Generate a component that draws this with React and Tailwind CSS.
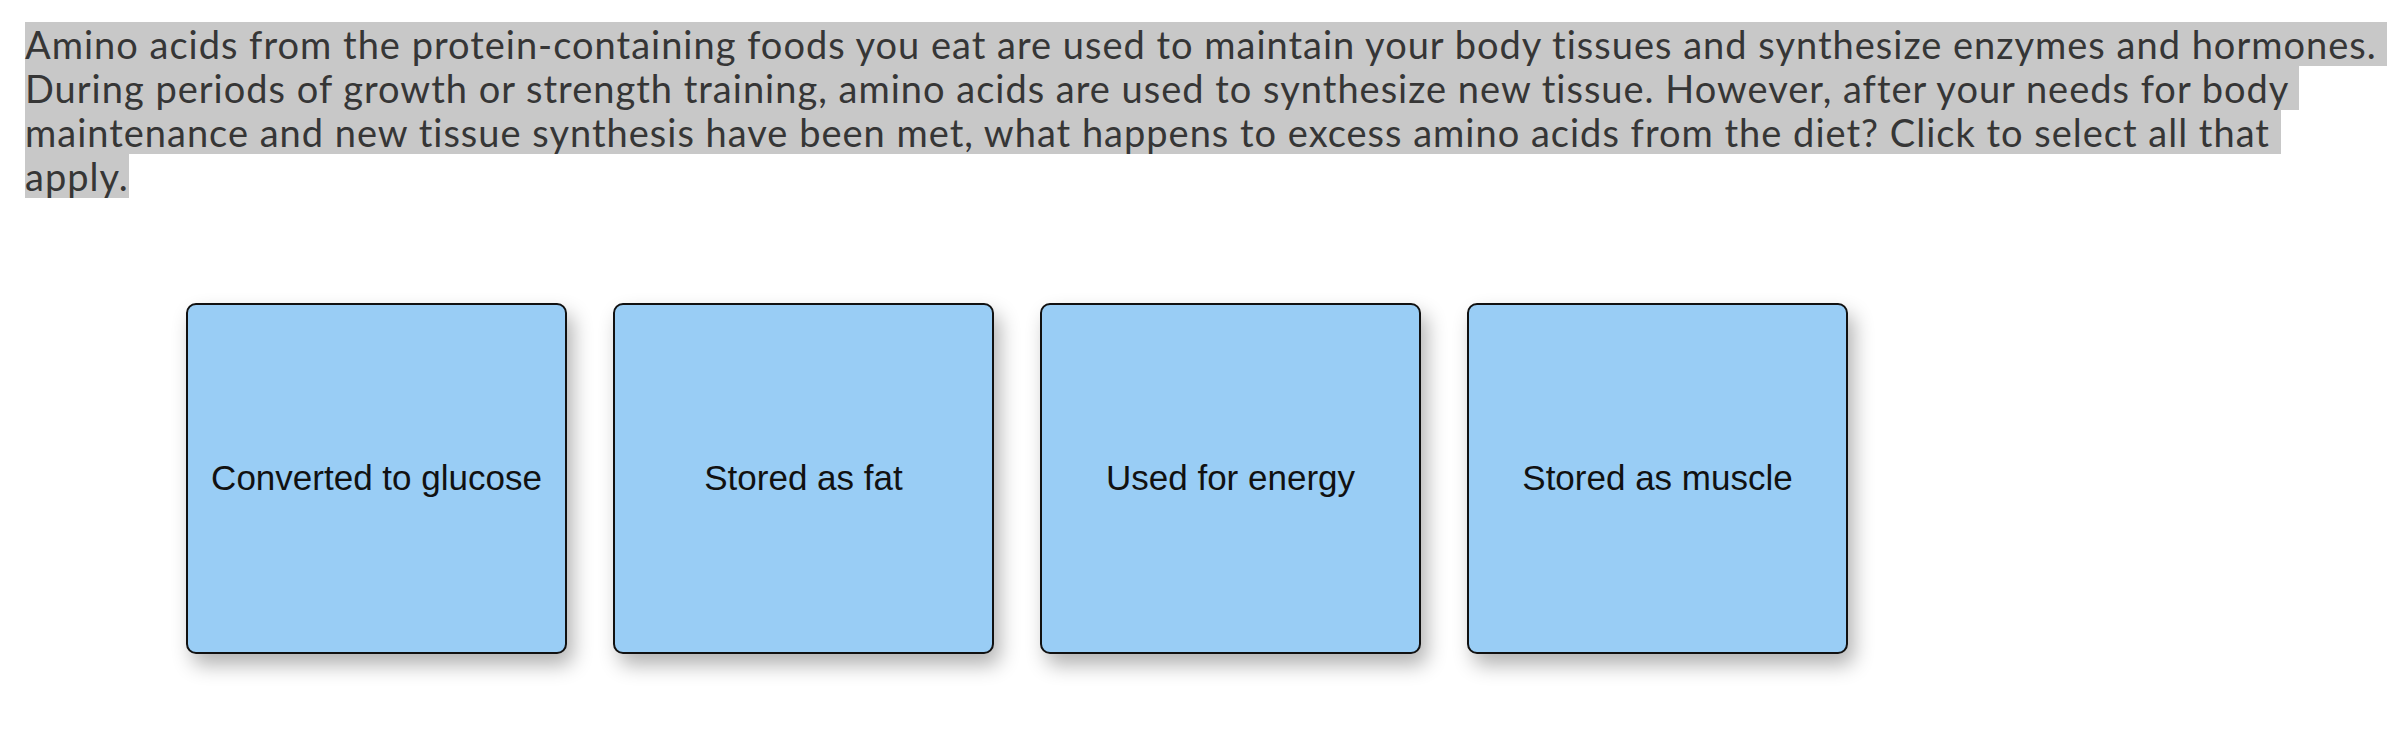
import React from "react";

const lines = [
  "Amino acids from the protein-containing foods you eat are used to maintain your body tissues and synthesize enzymes and hormones. ",
  "During periods of growth or strength training, amino acids are used to synthesize new tissue. However, after your needs for body ",
  "maintenance and new tissue synthesis have been met, what happens to excess amino acids from the diet? Click to select all that ",
  "apply.",
];

const options = ["Converted to glucose", "Stored as fat", "Used for energy", "Stored as muscle"];

export default function App() {
  return (
    <div className="w-[2395px] h-[742px] bg-white overflow-hidden">
      <div className="pl-[25px] pt-[22px] font-['Lato',sans-serif] text-[38px] leading-[44px] tracking-[1px] text-[#363636]">
        {lines.map((l, i) => (
          <div key={i} className="h-[44px]">
            <span className="inline-block h-[44px] bg-[#c8c8c8] whitespace-pre">{l}</span>
          </div>
        ))}
      </div>
      <div className="flex gap-[46px] pl-[186px] mt-[105px]">
        {options.map((o) => (
          <div
            key={o}
            className="w-[381px] h-[351px] rounded-[10px] border-2 border-[#111] bg-[#99cdf5] shadow-[6px_11px_20px_rgba(0,0,0,0.3)] flex items-center justify-center font-['Liberation_Sans',Arial,sans-serif] text-[35px] text-[#111]"
          >
            {o}
          </div>
        ))}
      </div>
    </div>
  );
}
